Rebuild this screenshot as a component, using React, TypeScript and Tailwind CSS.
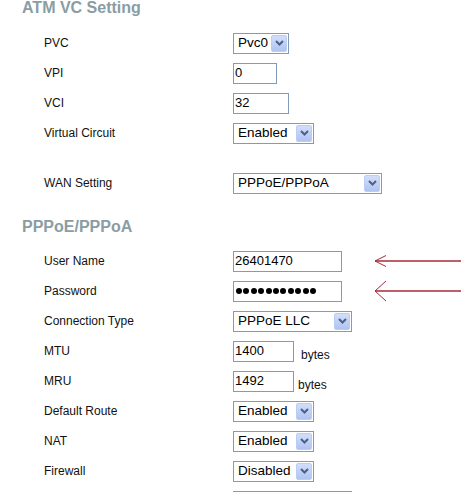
import React from 'react';

const font = { fontFamily: '"Liberation Sans", Arial, sans-serif' };

const Title: React.FC<{ text: string; className?: string }> = ({ text, className = '' }) => (
  <div className={`pl-[22px] text-[16px] leading-4 font-bold text-[#8a9da3] ${className}`}>{text}</div>
);

const Row: React.FC<{ label: string; children?: React.ReactNode }> = ({ label, children }) => (
  <div className="flex items-center h-[30px] pl-[44px]">
    <div className="w-[189px] shrink-0 text-[12px] text-[#111]">{label}</div>
    {children}
  </div>
);

const TextBox: React.FC<{ value?: string; width: string; children?: React.ReactNode }> = ({ value, width, children }) => (
  <div className={`${width} h-[21px] shrink-0 border border-[#7f9db9] bg-white flex items-center pl-[1px] text-[13px] text-black`}>
    {value}
    {children}
  </div>
);

const Select: React.FC<{ value: string; width: string }> = ({ value, width }) => (
  <div className={`${width} h-[21px] shrink-0 border border-[#7f9db9] bg-white flex items-center p-[1px]`}>
    <span className="flex-1 pl-[3px] text-[13.5px] text-black whitespace-nowrap overflow-hidden">{value}</span>
    <span className="w-[16px] h-full shrink-0 flex items-center justify-center rounded-[2px] border border-[#bacdf6] bg-gradient-to-b from-[#d2defb] to-[#afc4f1]">
      <svg width="9" height="6" viewBox="0 0 9 6">
        <path d="M1 1 L4.5 4.5 L8 1" fill="none" stroke="#4d6185" strokeWidth="2" />
      </svg>
    </span>
  </div>
);

const Arrow: React.FC<{ head: number }> = ({ head }) => (
  <svg className="ml-[33px] flex-1" height="24" viewBox="0 0 86 24" preserveAspectRatio="none">
    <line x1="0" y1="12" x2="86" y2="12" stroke="#a8283a" strokeWidth="1.3" />
    <path d={`M11 ${12 - head} L0 12 L11 ${12 + head}`} fill="none" stroke="#a8283a" strokeWidth="1" />
  </svg>
);

export default function App() {
  return (
    <div className="w-[461px] h-[492px] overflow-hidden bg-white" style={font}>
      <Title text="ATM VC Setting" />
      <div className="mt-[12px]">
        <Row label="PVC"><Select value="Pvc0" width="w-[56px]" /></Row>
        <Row label="VPI"><TextBox value="0" width="w-[44px]" /></Row>
        <Row label="VCI"><TextBox value="32" width="w-[56px]" /></Row>
        <Row label="Virtual Circuit"><Select value="Enabled" width="w-[81px]" /></Row>
      </div>
      <div className="mt-[20px]">
        <Row label="WAN Setting"><Select value="PPPoE/PPPoA" width="w-[149px]" /></Row>
      </div>
      <Title text="PPPoE/PPPoA" className="mt-[21px]" />
      <div className="mt-[11px]">
        <Row label="User Name">
          <TextBox value="26401470" width="w-[109px]" />
          <Arrow head={5.5} />
        </Row>
        <Row label="Password">
          <TextBox width="w-[109px]">
            <div className="flex gap-[1.4px] pl-[1px]">
              {Array.from({ length: 11 }).map((_, i) => (
                <span key={i} className="w-[6px] h-[6px] rounded-full bg-black" />
              ))}
            </div>
          </TextBox>
          <Arrow head={10} />
        </Row>
        <Row label="Connection Type"><Select value="PPPoE LLC" width="w-[119px]" /></Row>
        <Row label="MTU">
          <TextBox value="1400" width="w-[61px]" />
          <span className="ml-[7px] pt-[8px] text-[12px] text-[#111]">bytes</span>
        </Row>
        <Row label="MRU">
          <TextBox value="1492" width="w-[61px]" />
          <span className="ml-[4px] pt-[8px] text-[12px] text-[#111]">bytes</span>
        </Row>
        <Row label="Default Route"><Select value="Enabled" width="w-[81px]" /></Row>
        <Row label="NAT"><Select value="Enabled" width="w-[81px]" /></Row>
        <Row label="Firewall"><Select value="Disabled" width="w-[81px]" /></Row>
        <Row label=""><TextBox width="w-[119px]" /></Row>
      </div>
    </div>
  );
}
